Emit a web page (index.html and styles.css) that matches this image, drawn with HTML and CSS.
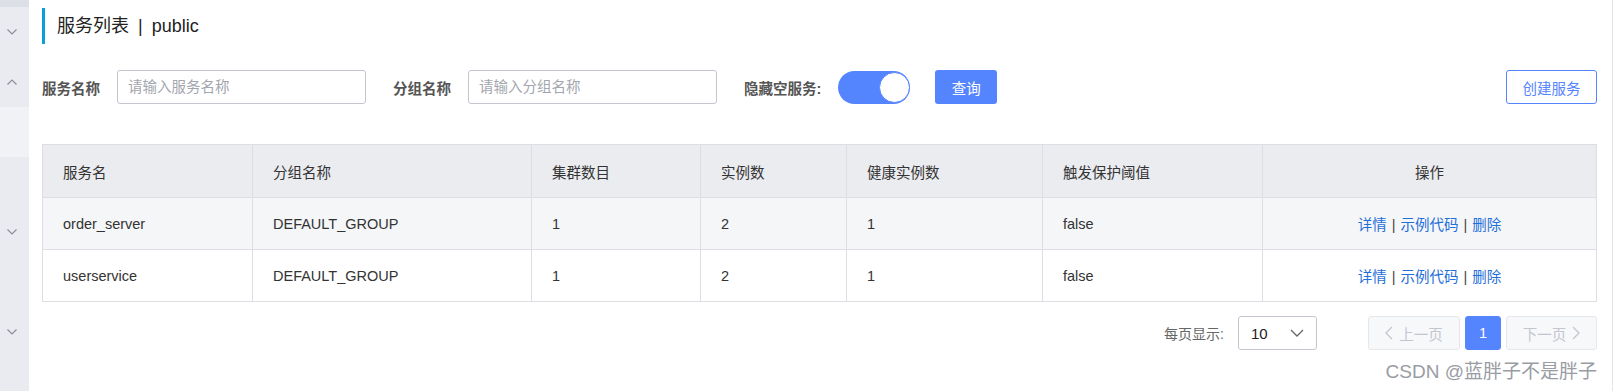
FILE: index.html
```html
<!DOCTYPE html>
<html lang="zh-CN">
<head>
    <meta charset="UTF-8">
    <meta name="viewport" content="width=device-width, initial-scale=1.0">
    <title>服务列表</title>
    <link rel="stylesheet" href="styles.css">
</head>
<body>
    <div class="sidebar">
        <div class="side-top"></div>
        <div class="side-item"><svg class="chev" viewBox="0 0 10 6"><polyline points="0.5,0.5 5,5 9.5,0.5"/></svg></div>
        <div class="side-item"><svg class="chev" viewBox="0 0 10 6"><polyline points="0.5,5.5 5,1 9.5,5.5"/></svg></div>
        <div class="side-item active"></div>
        <div class="side-item tall"><svg class="chev" viewBox="0 0 10 6"><polyline points="0.5,0.5 5,5 9.5,0.5"/></svg></div>
        <div class="side-item"><svg class="chev" viewBox="0 0 10 6"><polyline points="0.5,0.5 5,5 9.5,0.5"/></svg></div>
    </div>

    <div class="main">
        <h1 class="page-title">服务列表 <span class="title-sep">|</span> public</h1>

        <div class="search-bar">
            <label class="field-label">服务名称</label>
            <input class="field-input" type="text" placeholder="请输入服务名称">
            <label class="field-label gap">分组名称</label>
            <input class="field-input" type="text" placeholder="请输入分组名称">
            <label class="field-label gap">隐藏空服务:</label>
            <div class="switch"><span class="knob"></span></div>
            <button class="btn-primary">查询</button>
            <button class="btn-outline">创建服务</button>
        </div>

        <table class="service-table">
            <colgroup>
                <col style="width:210px">
                <col style="width:279px">
                <col style="width:169px">
                <col style="width:146px">
                <col style="width:196px">
                <col style="width:220px">
                <col>
            </colgroup>
            <thead>
                <tr>
                    <th>服务名</th>
                    <th>分组名称</th>
                    <th>集群数目</th>
                    <th>实例数</th>
                    <th>健康实例数</th>
                    <th>触发保护阈值</th>
                    <th class="center">操作</th>
                </tr>
            </thead>
            <tbody>
                <tr class="odd">
                    <td>order_server</td>
                    <td>DEFAULT_GROUP</td>
                    <td>1</td>
                    <td>2</td>
                    <td>1</td>
                    <td>false</td>
                    <td class="center"><a>详情</a><span class="sep">|</span><a>示例代码</a><span class="sep">|</span><a>删除</a></td>
                </tr>
                <tr>
                    <td>userservice</td>
                    <td>DEFAULT_GROUP</td>
                    <td>1</td>
                    <td>2</td>
                    <td>1</td>
                    <td>false</td>
                    <td class="center"><a>详情</a><span class="sep">|</span><a>示例代码</a><span class="sep">|</span><a>删除</a></td>
                </tr>
            </tbody>
        </table>

        <div class="pager">
            <span class="pager-label">每页显示:</span>
            <div class="select">
                <span>10</span>
                <svg class="select-arrow" viewBox="0 0 14 8"><polyline points="1,1 7,7 13,1"/></svg>
            </div>
            <button class="page-btn prev" disabled>
                <svg class="page-arrow" viewBox="0 0 8 14"><polyline points="7,1 1,7 7,13"/></svg>上一页
            </button>
            <button class="page-btn current">1</button>
            <button class="page-btn next" disabled>
                下一页<svg class="page-arrow" viewBox="0 0 8 14"><polyline points="1,1 7,7 1,13"/></svg>
            </button>
        </div>

        <div class="watermark">CSDN @蓝胖子不是胖子</div>
    </div>
</body>
</html>
```

FILE: styles.css
```css
body {
    margin: 0;
    padding: 0;
    display: flex;
    height: 391px;
    overflow: hidden;
    background: #fff;
    font-family: "Liberation Sans", "Noto Sans CJK SC", sans-serif;
    color: #333;
}

.sidebar {
    width: 29px;
    flex-shrink: 0;
    background-color: #e9ebf0;
    display: flex;
    flex-direction: column;
}

.side-top {
    height: 7px;
    background-color: #dcdfe6;
}

.side-item {
    height: 50px;
    display: flex;
    align-items: center;
    padding-left: 7px;
}

.side-item.active {
    background-color: #f1f2f6;
}

.side-item.tall {
    height: 150px;
}

.chev {
    width: 10px;
    height: 6px;
    fill: none;
    stroke: #8a8f99;
    stroke-width: 1.2;
}

.main {
    flex: 1;
    padding: 8px 15px 0 13px;
    border-right: 1px solid #e3e5ea;
}

.page-title {
    margin: 0;
    height: 36px;
    line-height: 36px;
    border-left: 3px solid #0a9fdb;
    padding-left: 12px;
    font-size: 18px;
    font-weight: normal;
    color: #222;
}

.title-sep {
    margin: 0 4px;
}

.search-bar {
    display: flex;
    align-items: center;
    margin-top: 26px;
    height: 34px;
}

.field-label {
    font-size: 14.5px;
    font-weight: bold;
    color: #555;
    margin-right: 17px;
}

.field-label.gap {
    margin-left: 27px;
}

.field-input {
    width: 249px;
    height: 34px;
    box-sizing: border-box;
    border: 1px solid #c4c6cf;
    border-radius: 3px;
    padding: 0 10px;
    font-size: 14.5px;
    font-family: "Liberation Sans", "Noto Sans CJK SC", sans-serif;
    color: #333;
}

.field-input::placeholder {
    color: #a3a6ae;
}

.switch {
    width: 72px;
    height: 33px;
    border-radius: 17px;
    background-color: #5584ff;
    display: flex;
    justify-content: flex-end;
    align-items: center;
    box-sizing: border-box;
}

.knob {
    width: 31px;
    height: 31px;
    border-radius: 50%;
    background-color: #fff;
    border: 1px solid #5584ff;
    box-sizing: border-box;
}

.btn-primary {
    margin-left: 25px;
    width: 62px;
    height: 34px;
    border: none;
    border-radius: 3px;
    background-color: #5584ff;
    color: #fff;
    font-size: 14.5px;
    font-family: "Noto Sans CJK SC", sans-serif;
}

.btn-outline {
    margin-left: auto;
    width: 91px;
    height: 34px;
    border: 1px solid #5584ff;
    border-radius: 3px;
    background-color: #fff;
    color: #5584ff;
    font-size: 14.5px;
    font-family: "Noto Sans CJK SC", sans-serif;
}

.service-table {
    margin-top: 40px;
    width: 100%;
    border-collapse: collapse;
    table-layout: fixed;
    font-size: 14.5px;
}

.service-table th,
.service-table td {
    border: 1px solid #dcdee3;
    padding: 0 20px;
    text-align: left;
    color: #333;
}

.service-table th {
    height: 52px;
    background-color: #ebecf0;
    font-weight: normal;
}

.service-table td {
    height: 51px;
}

.service-table tr.odd td {
    background-color: #f5f6f8;
}

.service-table .center {
    text-align: center;
}

.service-table a {
    color: #1f6fd8;
}

.service-table .sep {
    margin: 0 5px;
    color: #444;
}

.pager {
    display: flex;
    justify-content: flex-end;
    align-items: center;
    margin-top: 14px;
    height: 34px;
}

.pager-label {
    font-size: 14px;
    color: #666;
    margin-right: 14px;
}

.select {
    width: 79px;
    height: 34px;
    box-sizing: border-box;
    border: 1px solid #c4c6cf;
    border-radius: 3px;
    display: flex;
    align-items: center;
    justify-content: space-between;
    padding: 0 12px 0 12px;
    font-size: 15px;
    color: #222;
    margin-right: 51px;
}

.select-arrow {
    width: 14px;
    height: 8px;
    fill: none;
    stroke: #666;
    stroke-width: 1.3;
}

.page-btn {
    height: 34px;
    box-sizing: border-box;
    border: 1px solid #e6e7eb;
    border-radius: 3px;
    background-color: #f7f8fa;
    color: #c4c6cf;
    font-size: 14.5px;
    font-family: "Noto Sans CJK SC", sans-serif;
    display: flex;
    align-items: center;
    justify-content: center;
    gap: 6px;
    padding: 0;
}

.page-btn.prev {
    width: 92px;
}

.page-btn.next {
    width: 91px;
}

.page-btn.current {
    width: 36px;
    margin: 0 5px;
    border-color: #5584ff;
    background-color: #5584ff;
    color: #fff;
    font-family: "Liberation Sans", sans-serif;
}

.page-arrow {
    width: 8px;
    height: 14px;
    fill: none;
    stroke: #c4c6cf;
    stroke-width: 1.3;
}

.watermark {
    text-align: right;
    margin-top: 6px;
    font-size: 19px;
    color: #999ca3;
    font-family: "Liberation Sans", "Noto Sans CJK SC", sans-serif;
}
```
